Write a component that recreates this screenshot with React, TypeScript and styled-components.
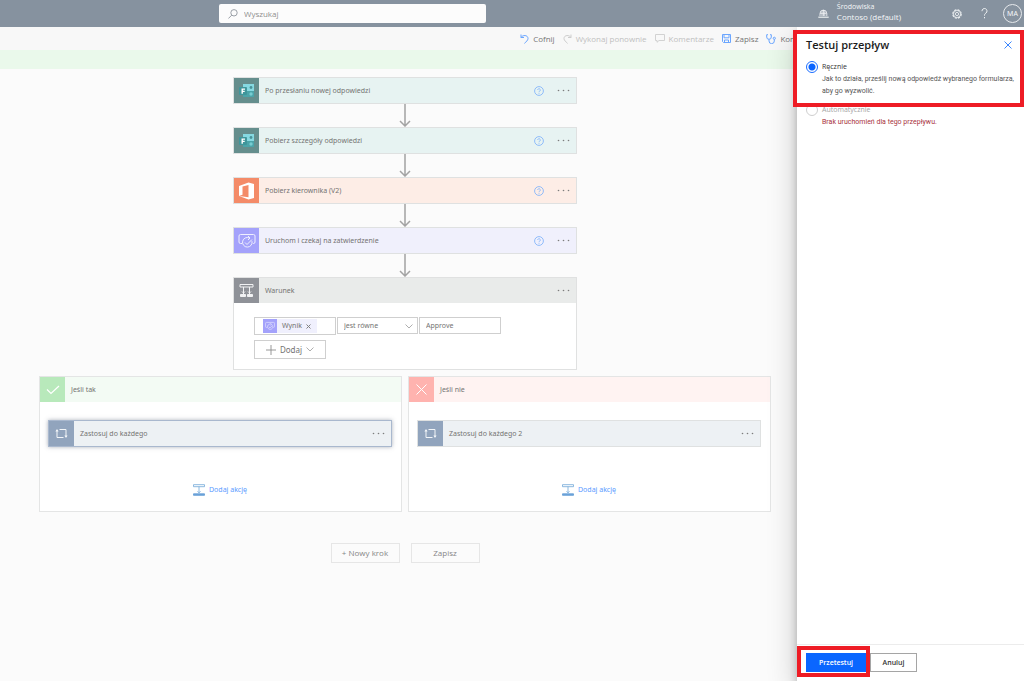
import React from "react";
import styled, { createGlobalStyle, css } from "styled-components";

const GlobalStyle = createGlobalStyle`
  *, *::before, *::after { box-sizing: border-box; }
  html, body, #root { margin: 0; height: 100%; }
  body {
    background: #fbfbfb;
    color: #747372;
    font-family: "Noto Sans", "Open Sans", sans-serif;
    font-size: 7px;
    line-height: 12px;
  }
  button, input, select { font: inherit; color: inherit; margin: 0; }
  svg { display: block; flex: none; }
`;

const Page = styled.div`
  position: relative;
  display: flex;
  flex-direction: column;
  min-height: 100vh;
  overflow: hidden;
`;

const PlainButton = styled.button`
  display: flex;
  align-items: center;
  justify-content: center;
  padding: 0;
  border: 0;
  background: none;
  cursor: pointer;
`;

/* ---------- Header ---------- */

const Header = styled.header`
  display: grid;
  grid-template-columns: 219fr 267fr 538fr;
  align-items: center;
  height: 27px;
  background: #86929f;
  color: #f4f6f8;
`;

const SearchBox = styled.label`
  grid-column: 2;
  display: flex;
  align-items: center;
  gap: 6px;
  height: 19px;
  padding: 0 9px;
  border-radius: 2px;
  background: #fcfcfc;
  color: #8e959d;
`;

const SearchInput = styled.input`
  flex: 1;
  min-width: 0;
  padding: 0;
  border: 0;
  outline: 0;
  background: none;
  font-family: "Open Sans", sans-serif;
  font-size: 8px;
  &::placeholder { color: #8f8f8f; opacity: 1; }
`;

const HeaderTools = styled.div`
  display: flex;
  align-items: center;
  justify-content: flex-end;
  padding-right: 2px;
`;

const Environment = styled.div`
  display: flex;
  align-items: center;
  gap: 8px;
  margin-right: 51px;
  padding-bottom: 3px;
  font-family: "Open Sans", sans-serif;
  line-height: 10px;
  svg { margin-top: 3px; }
`;

const EnvironmentName = styled.div`
  font-size: 8px;
`;

const Avatar = styled.button`
  width: 19px;
  height: 19px;
  margin-left: 13px;
  padding: 0;
  border: 1px solid #e6e9ec;
  border-radius: 50%;
  background: none;
  line-height: 16px;
`;

const HelpGlyph = styled(PlainButton)`
  width: 12px;
  margin-left: 16px;
`;

/* ---------- Command bar ---------- */

const CommandBar = styled.nav`
  display: flex;
  align-items: center;
  justify-content: flex-end;
  gap: 8px;
  height: 23px;
  padding-right: 229px;
  background: #f8f8f8;
`;

const Command = styled(PlainButton)`
  gap: 4px;
  color: #757575;
  font-family: "Open Sans", sans-serif;
  font-size: 8px;
  font-weight: 500;
  white-space: nowrap;
  &:disabled { color: #bfbfbf; cursor: default; }
`;

const StatusStrip = styled.div`
  height: 19px;
  background: #eaf9eb;
`;

/* ---------- Flow canvas ---------- */

const Canvas = styled.main`
  display: flex;
  flex: 1;
  flex-direction: column;
  align-items: center;
  padding: 8px 214px 0 0;
`;

const Steps = styled.div`
  width: 344px;
`;

type Tone = { bar: string; tile: string };

const tones: Record<string, Tone> = {
  forms: { bar: "#e7f3f2", tile: "#658e8d" },
  office: { bar: "#fdede6", tile: "#f48b68" },
  approval: { bar: "#f0f0fc", tile: "#a4a2fb" },
  control: { bar: "#e9ebea", tile: "#8f9298" },
  loop: { bar: "#edf1f4", tile: "#91a4bd" },
  yes: { bar: "#f3fbf4", tile: "#b8e9bb" },
  no: { bar: "#fff3f2", tile: "#ffb3af" },
};

const Bar = styled.div<{ $tone: Tone; $framed?: boolean; $selected?: boolean }>`
  display: flex;
  align-items: center;
  height: ${(p) => (p.$framed ? 27 : 25)}px;
  background: ${(p) => p.$tone.bar};
  ${(p) => p.$framed && css`border: 1px solid #dfe1e1;`}
  ${(p) =>
    p.$selected &&
    css`
      border-color: #a9b8ce;
      box-shadow: 0 0 4px rgba(90, 100, 120, 0.5);
    `}
`;

const Tile = styled.div<{ $tone: Tone }>`
  display: flex;
  flex: none;
  align-items: center;
  justify-content: center;
  width: 25px;
  height: 25px;
  background: ${(p) => p.$tone.tile};
`;

const BarTitle = styled.div`
  flex: 1;
  padding-left: 6px;
  white-space: nowrap;
`;

const HelpButton = styled(PlainButton)`
  margin-right: 13px;
`;

const MenuButton = styled(PlainButton)`
  margin-right: 6px;
  color: #7d7d7d;
`;

const Connector = styled.div`
  display: flex;
  justify-content: center;
  height: 23px;
`;

const ConditionBox = styled.section`
  border: 1px solid #e0e1e1;
  background: #fff;
`;

const ConditionBody = styled.div`
  display: flex;
  flex-direction: column;
  align-items: flex-start;
  gap: 5px;
  padding: 14px 20px 10px;
`;

const ConditionRow = styled.div`
  display: flex;
  align-items: flex-start;
  gap: 1px;
`;

const fieldFrame = css`
  width: 82px;
  height: 17px;
  border: 1px solid #cfcfcf;
  border-radius: 0;
  background: #fff;
`;

const TokenField = styled.div`
  ${fieldFrame}
  height: 18px;
  padding: 1px 8px;
`;

const Token = styled.div`
  display: flex;
  align-items: center;
  width: 54px;
  height: 14px;
  background: #f0f0fd;
`;

const TokenTile = styled.div`
  display: flex;
  align-items: center;
  justify-content: center;
  width: 14px;
  height: 14px;
  margin-right: 5px;
  background: #a4a2fb;
`;

const TokenRemove = styled(PlainButton)`
  margin-left: 4px;
`;

const SelectWrap = styled.div`
  position: relative;
  display: flex;
  svg {
    position: absolute;
    right: 5px;
    top: 7px;
    pointer-events: none;
  }
`;

const Select = styled.select`
  ${fieldFrame}
  width: 81px;
  padding: 0 6px;
  appearance: none;
`;

const TextField = styled.input`
  ${fieldFrame}
  padding: 0 6px;
`;

const AddButton = styled(PlainButton)`
  gap: 4px;
  width: 72px;
  height: 19px;
  border: 1px solid #cfcfcf;
  font-size: 8px;
`;

const Branches = styled.div`
  display: grid;
  grid-template-columns: 1fr 1fr;
  gap: 6px;
  width: 732px;
  margin-top: 6px;
`;

const Branch = styled.section`
  height: 136px;
  border: 1px solid #e4e5e5;
  background: #fff;
`;

const BranchBody = styled.div`
  display: flex;
  flex-direction: column;
  gap: 35px;
  padding: 18px 9px 0 8px;
`;

const AddAction = styled(PlainButton)`
  align-self: center;
  gap: 4px;
  height: 16px;
  color: #5c9bff;
`;

const FlowActions = styled.div`
  display: flex;
  gap: 11px;
  margin-top: 31px;
`;

const FlowButton = styled(PlainButton)`
  width: 69px;
  height: 20px;
  border: 1px solid #e6e6e6;
  color: #868686;
  font-family: "Open Sans", sans-serif;
  font-size: 8px;
`;

/* ---------- Test panel ---------- */

const Panel = styled.aside`
  position: absolute;
  top: 27px;
  right: 0;
  bottom: 0;
  display: flex;
  flex-direction: column;
  width: 227px;
  background: #fff;
  color: #555;
  font-family: "Open Sans", sans-serif;
  box-shadow: 0 10px 28px rgba(0, 0, 0, 0.22), 0 4px 8px rgba(0, 0, 0, 0.22);
  clip-path: inset(0 0 0 -40px);
`;

const PanelHeader = styled.div`
  display: flex;
  align-items: center;
  justify-content: space-between;
  padding: 10px 12px 8px 9px;
`;

const PanelTitle = styled.h2`
  margin: 0;
  color: #1b1b1b;
  font-size: 11px;
  font-weight: 600;
  line-height: 16px;
`;

const Options = styled.div`
  flex: 1;
  padding-left: 9px;
`;

const Option = styled.div`
  display: grid;
  grid-template-columns: 11px 1fr;
  column-gap: 5px;
  align-items: center;
  margin-bottom: 7px;
`;

const Radio = styled.input`
  appearance: none;
  width: 12px;
  height: 12px;
  margin: 0;
  border: 1px solid #1a6dff;
  border-radius: 50%;
  background: #fff;
  &:checked { background: radial-gradient(circle, #0a64ff 3px, #fff 4px); }
  &:disabled { border-color: #cfcfcf; }
`;

const OptionLabel = styled.label<{ $muted?: boolean }>`
  color: ${(p) => (p.$muted ? "#a4a4a4" : "#333")};
`;

const OptionNote = styled.div<{ $error?: boolean }>`
  grid-column: 2;
  color: ${(p) => (p.$error ? "#a83340" : "#555")};
  font-family: Roboto, "Open Sans", sans-serif;
`;

const PanelFooter = styled.div`
  display: flex;
  gap: 4px;
  height: 37px;
  padding: 8px 9px 0;
  border-top: 1px solid #ececec;
`;

const PanelButton = styled(PlainButton)<{ $primary?: boolean }>`
  width: ${(p) => (p.$primary ? 60 : 47)}px;
  height: 19px;
  border: 1px solid ${(p) => (p.$primary ? "#0a66ff" : "#a5a5a5")};
  background: ${(p) => (p.$primary ? "#0a66ff" : "#fff")};
  color: ${(p) => (p.$primary ? "#fff" : "#333")};
  font-weight: 600;
`;

const Highlight = styled.div<{ $area: "option" | "submit" }>`
  position: absolute;
  border: 4px solid #ee1c25;
  pointer-events: none;
  ${(p) =>
    p.$area === "option"
      ? css`top: 3px; left: -4px; right: 0; height: 77px;`
      : css`bottom: 4px; left: 0; width: 73px; height: 31px;`}
`;

/* ---------- Icons ---------- */

const FormsIcon = () => (
  <svg width="16" height="14" viewBox="0 0 16 14">
    <path d="M4 0h11v7H4z" fill="#86d9e1" />
    <path d="M4 7h11v6H4z" fill="#4ba4a9" />
    <circle cx="12" cy="3.500" r="1.400" fill="#4a9399" />
    <circle cx="12" cy="10" r="1.700" fill="#78cdd2" />
    <rect x="0" y="3" width="8" height="8" rx="1" fill="#3f969b" />
    <path d="M2.500 4.500h3.500v1.200H3.900v1h1.800v1.200H3.900v1.800H2.500z" fill="#fff" />
  </svg>
);

const OfficeIcon = () => (
  <svg width="15" height="18" viewBox="0 0 15 18">
    <path d="M0 4 9.500.5 15 2v14l-5.500 1.500L0 14l9.500 1.200V3L3.500 4.500v8.200L0 14z" fill="#fff" />
  </svg>
);

const ApprovalIcon = ({ size = 18 }: { size?: number }) => (
  <svg width={size} height={size} viewBox="0 0 18 18" fill="none" stroke="#efeffe" strokeWidth="1">
    <path d="M4 11.500H2.500a1.500 1.500 0 0 1-1.500-1.500V4a1.500 1.500 0 0 1 1.500-1.500h13A1.500 1.500 0 0 1 17 4v6a1.500 1.500 0 0 1-1.500 1.500H15" />
    <path d="M11.500 6A4.800 4.800 0 1 0 14 9.200M10 4l2 2-2 2" />
    <path d="m7 10.500 2 2 5-5" />
  </svg>
);

const ConditionIcon = () => (
  <svg width="15" height="15" viewBox="0 0 15 15" fill="none" stroke="#f1f2f3" strokeWidth="1">
    <path d="M1 1.500h13v2.500H1zM4.500 4v7M10.500 4v7M3 8.500l1.500 1.500L6 8.500M9 8.500l1.500 1.500L12 8.500" />
    <path d="M1.500 11.500h5v2h-5zM8.500 11.500h5v2h-5z" fill="#f1f2f3" />
  </svg>
);

const LoopIcon = () => (
  <svg width="13" height="11" viewBox="0 0 13 11" fill="none" stroke="#f2f5f8" strokeWidth="1">
    <path d="M4.500 1.500h6.500V9M8.500 9.500H2V2" />
    <path d="M.4 3.500 2 1l1.600 2.500zM9.400 7.500 11 10l1.600-2.500z" fill="#f2f5f8" stroke="none" />
  </svg>
);

const CheckIcon = () => (
  <svg width="14" height="10" viewBox="0 0 14 10" fill="none" stroke="#fff" strokeWidth="1.200">
    <path d="m1 4.500 4 4L13 1" />
  </svg>
);

const CrossIcon = ({ size, color, width = 1 }: { size: number; color: string; width?: number }) => (
  <svg width={size} height={size} viewBox={`0 0 ${size} ${size}`} fill="none" stroke={color} strokeWidth={width}>
    <path d={`M.5 .5L${size - 0.5} ${size - 0.5}M${size - 0.5} .5L.5 ${size - 0.5}`} />
  </svg>
);

const QuestionIcon = () => (
  <svg width="10" height="10" viewBox="0 0 10 10" fill="none" stroke="#84b5fb" strokeWidth=".9">
    <circle cx="5" cy="5" r="4.400" />
    <path d="M3.700 4a1.300 1.300 0 1 1 2 1.100c-.5.300-.7.500-.7 1M5 6.900v.8" />
  </svg>
);

const DotsIcon = () => (
  <svg width="13" height="3" viewBox="0 0 13 3" fill="currentColor">
    <circle cx="1.500" cy="1.500" r=".8" />
    <circle cx="6.500" cy="1.500" r=".8" />
    <circle cx="11.500" cy="1.500" r=".8" />
  </svg>
);

const ArrowIcon = () => (
  <svg width="12" height="23" viewBox="0 0 12 23" fill="none" stroke="#a3a3a3" strokeWidth="1.500">
    <path d="M6 0v22M1 17l5 5 5-5" />
  </svg>
);

const ChevronIcon = () => (
  <svg width="8" height="5" viewBox="0 0 8 5" fill="none" stroke="#a5a5a5" strokeWidth=".9">
    <path d="m.5.5 3.500 3.500L7.500.5" />
  </svg>
);

const PlusIcon = () => (
  <svg width="10" height="10" viewBox="0 0 10 10" fill="none" stroke="#8d8d8d" strokeWidth=".9">
    <path d="M5 0v10M0 5h10" />
  </svg>
);

const AddActionIcon = () => (
  <svg width="12" height="12" viewBox="0 0 12 12" fill="none" stroke="#7fb0dc" strokeWidth=".9">
    <path d="M.5.700h11v2H.5zM6 2.700V9M4.500 7.300 6 8.800l1.500-1.500" />
    <path d="M.5 9.800h11v1.500H.5z" fill="#6aa2d8" stroke="#6aa2d8" />
  </svg>
);

const SearchIcon = () => (
  <svg width="10" height="10" viewBox="0 0 10 10" fill="none" stroke="currentColor" strokeWidth=".9">
    <circle cx="6" cy="3.800" r="3.200" />
    <path d="M3.700 6.200.4 9.500" />
  </svg>
);

const EnvironmentIcon = () => (
  <svg width="11" height="10" viewBox="0 0 11 10" fill="none" stroke="#eef1f3" strokeWidth=".9">
    <path d="M2 7V4.500a3.300 3.300 0 0 1 6.800 0V7M2 4.300h6.800M4 7V2.500L5.400 1l1.400 1.500V7M5.400 1v6" />
    <path d="M.3 7.600h10.400v1.200H.3z" fill="#eef1f3" stroke="none" />
  </svg>
);

const GearIcon = () => (
  <svg width="10" height="10" viewBox="0 0 10 10" fill="none" stroke="#eef1f3">
    <circle cx="5" cy="5" r="4.200" strokeWidth="1.200" strokeDasharray="2.200 1.100" />
    <circle cx="5" cy="5" r="3.500" strokeWidth=".8" />
    <circle cx="5" cy="5" r="1.600" strokeWidth=".9" />
  </svg>
);

const HelpIcon = () => (
  <svg width="7" height="11" viewBox="0 0 7 11" fill="none" stroke="#eef1f3" strokeWidth="1">
    <path d="M1 3.200A2.500 2.500 0 1 1 5 5c-1 .8-1.500 1.200-1.500 2.600M3.500 9v1.300" />
  </svg>
);

const UndoIcon = ({ flipped }: { flipped?: boolean }) => (
  <svg width="9" height="10" viewBox="0 0 9 10" fill="none" stroke={flipped ? "#cdcdcd" : "#6ba6ff"} strokeWidth="1">
    {flipped ? (
      <path d="M8 .5v3H5M8 3.500C6.500.8 1 .7 1 4.500 1 6.500 3 7.500 4.500 9.500" />
    ) : (
      <path d="M1 .5v3h3M1 3.500C2.500.8 8 .7 8 4.500c0 2-2 3-3.500 5" />
    )}
  </svg>
);

const CommentIcon = () => (
  <svg width="10" height="9" viewBox="0 0 10 9" fill="none" stroke="#cdcdcd" strokeWidth=".9">
    <path d="M.5.5h9v6H4L2 8.300V6.500H.5z" />
  </svg>
);

const SaveIcon = () => (
  <svg width="9" height="9" viewBox="0 0 9 9" fill="none" stroke="#6ba6ff" strokeWidth="1">
    <path d="M.5.5h8v8h-7l-1-1zM2 .5v3.300h5V.5M2.500 8.500V6h4v2.500" />
  </svg>
);

const StethoscopeIcon = () => (
  <svg width="10" height="10" viewBox="0 0 10 10" fill="none" stroke="#6ba6ff" strokeWidth="1">
    <path d="M2 .7H.7V3a2.300 2.300 0 0 0 4.600 0V.7H4M3 5.300V7a2.500 2.500 0 0 0 5.300 0V5.500" />
    <circle cx="8.300" cy="4.300" r="1.100" />
  </svg>
);

/* ---------- Parts ---------- */

type BarProps = {
  tone: Tone;
  icon: React.ReactNode;
  title: string;
  framed?: boolean;
  selected?: boolean;
  help?: boolean;
  menu?: boolean;
};

const StepBar = ({ tone, icon, title, framed, selected, help, menu = true }: BarProps) => (
  <Bar $tone={tone} $framed={framed} $selected={selected}>
    <Tile $tone={tone}>{icon}</Tile>
    <BarTitle>{title}</BarTitle>
    {help && (
      <HelpButton type="button">
        <QuestionIcon />
      </HelpButton>
    )}
    {menu && (
      <MenuButton type="button">
        <DotsIcon />
      </MenuButton>
    )}
  </Bar>
);

const steps = [
  { title: "Po przesłaniu nowej odpowiedzi", tone: tones.forms, icon: <FormsIcon /> },
  { title: "Pobierz szczegóły odpowiedzi", tone: tones.forms, icon: <FormsIcon /> },
  { title: "Pobierz kierownika (V2)", tone: tones.office, icon: <OfficeIcon /> },
  { title: "Uruchom i czekaj na zatwierdzenie", tone: tones.approval, icon: <ApprovalIcon /> },
];

const branches = [
  { title: "Jeśli tak", tone: tones.yes, icon: <CheckIcon />, step: "Zastosuj do każdego", selected: true },
  { title: "Jeśli nie", tone: tones.no, icon: <CrossIcon size={11} color="#fff" />, step: "Zastosuj do każdego 2", selected: false },
];

export default function App() {
  return (
    <>
      <GlobalStyle />
      <Page>
        <Header>
          <SearchBox>
            <SearchIcon />
            <SearchInput type="search" placeholder="Wyszukaj" />
          </SearchBox>
          <HeaderTools>
            <Environment>
              <EnvironmentIcon />
              <div>
                <div>Środowiska</div>
                <EnvironmentName>Contoso (default)</EnvironmentName>
              </div>
            </Environment>
            <PlainButton type="button"><GearIcon /></PlainButton>
            <HelpGlyph type="button"><HelpIcon /></HelpGlyph>
            <Avatar type="button">MA</Avatar>
          </HeaderTools>
        </Header>

        <CommandBar>
          <Command type="button"><UndoIcon />Cofnij</Command>
          <Command type="button" disabled><UndoIcon flipped />Wykonaj ponownie</Command>
          <Command type="button" disabled><CommentIcon />Komentarze</Command>
          <Command type="button"><SaveIcon />Zapisz</Command>
          <Command type="button"><StethoscopeIcon />Kon</Command>
        </CommandBar>
        <StatusStrip />

        <Canvas>
          <Steps>
            {steps.map((s) => (
              <React.Fragment key={s.title}>
                <StepBar {...s} framed help />
                <Connector><ArrowIcon /></Connector>
              </React.Fragment>
            ))}
            <ConditionBox>
              <StepBar tone={tones.control} icon={<ConditionIcon />} title="Warunek" />
              <ConditionBody>
                <ConditionRow>
                  <TokenField>
                    <Token>
                      <TokenTile><ApprovalIcon size={10} /></TokenTile>
                      Wynik
                      <TokenRemove type="button"><CrossIcon size={5} color="#808080" /></TokenRemove>
                    </Token>
                  </TokenField>
                  <SelectWrap>
                    <Select aria-label="Warunek" defaultValue="eq">
                      <option value="eq">jest równe</option>
                    </Select>
                    <ChevronIcon />
                  </SelectWrap>
                  <TextField aria-label="Wynik" defaultValue="Approve" />
                </ConditionRow>
                <AddButton type="button"><PlusIcon />Dodaj<ChevronIcon /></AddButton>
              </ConditionBody>
            </ConditionBox>
          </Steps>

          <Branches>
            {branches.map((b) => (
              <Branch key={b.title}>
                <StepBar tone={b.tone} icon={b.icon} title={b.title} menu={false} />
                <BranchBody>
                  <StepBar tone={tones.loop} icon={<LoopIcon />} title={b.step} framed selected={b.selected} />
                  <AddAction type="button"><AddActionIcon />Dodaj akcję</AddAction>
                </BranchBody>
              </Branch>
            ))}
          </Branches>

          <FlowActions>
            <FlowButton type="button">+ Nowy krok</FlowButton>
            <FlowButton type="button">Zapisz</FlowButton>
          </FlowActions>
        </Canvas>

        <Panel>
          <PanelHeader>
            <PanelTitle>Testuj przepływ</PanelTitle>
            <PlainButton type="button"><CrossIcon size={8} color="#3b86ff" width={1} /></PlainButton>
          </PanelHeader>
          <Options>
            <Option>
              <Radio type="radio" name="mode" id="manual" defaultChecked />
              <OptionLabel htmlFor="manual">Ręcznie</OptionLabel>
              <OptionNote>Jak to działa, prześlij nową odpowiedź wybranego formularza, aby go wyzwolić.</OptionNote>
            </Option>
            <Option>
              <Radio type="radio" name="mode" id="auto" disabled />
              <OptionLabel htmlFor="auto" $muted>Automatycznie</OptionLabel>
              <OptionNote $error>Brak uruchomień dla tego przepływu.</OptionNote>
            </Option>
          </Options>
          <PanelFooter>
            <PanelButton type="button" $primary>Przetestuj</PanelButton>
            <PanelButton type="button">Anuluj</PanelButton>
          </PanelFooter>
          <Highlight $area="option" />
          <Highlight $area="submit" />
        </Panel>
      </Page>
    </>
  );
}
